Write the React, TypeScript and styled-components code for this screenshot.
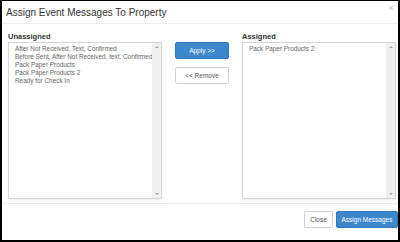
import React from 'react';
import styled, { createGlobalStyle } from 'styled-components';

const GlobalStyle = createGlobalStyle`
  html, body {
    margin: 0;
    padding: 0;
    background: #fff;
  }
  body {
    font-family: "Liberation Sans", Arial, sans-serif;
    color: #333;
  }
`;

const Frame = styled.div`
  width: 400px;
  height: 242px;
  box-sizing: border-box;
  border-style: solid;
  border-color: #000;
  border-width: 1px 2px 2px 2px;
  background: #fff;
  display: flex;
  flex-direction: column;
`;

const Header = styled.div`
  position: relative;
  height: 22px;
  padding: 0 4px;
  display: flex;
  align-items: center;
  border-bottom: 1px solid #ececec;
`;

const Title = styled.h4`
  margin: 0;
  font-size: 10px;
  font-weight: normal;
  color: #333;
`;

const CloseX = styled.span`
  position: absolute;
  right: 4px;
  top: 3px;
  font-size: 9px;
  color: #bbb;
  line-height: 9px;
`;

const Body = styled.div`
  flex: 1;
  padding: 8px 0 4px 6px;
  display: grid;
  grid-template-columns: 154px 54px 154px;
  column-gap: 13px;
`;

const Column = styled.div`
  display: flex;
  flex-direction: column;
`;

const Label = styled.div`
  font-size: 7.5px;
  font-weight: bold;
  color: #333;
  height: 9px;
  line-height: 9px;
  margin-bottom: 1px;
`;

const ListBox = styled.div`
  height: 157px;
  box-sizing: border-box;
  border: 1px solid #d6d6d6;
  box-shadow: 0 1px 2px rgba(0, 0, 0, 0.08);
  display: flex;
  background: #fff;
`;

const Items = styled.div`
  flex: 1;
  padding: 2px 0 0 6px;
  overflow: hidden;
`;

const Item = styled.div`
  font-size: 6.4px;
  line-height: 8px;
  color: #666;
  white-space: nowrap;
`;

const Track = styled.div`
  width: 9px;
  background: #f0f0f0;
  display: flex;
  flex-direction: column;
  justify-content: space-between;
  align-items: center;
  padding: 3px 0;
`;

const Arrow = styled.div<{ $down?: boolean }>`
  width: 0;
  height: 0;
  border-left: 2px solid transparent;
  border-right: 2px solid transparent;
  ${p => (p.$down ? 'border-top: 2px solid #a3a3a3;' : 'border-bottom: 2px solid #a3a3a3;')}
`;

const Actions = styled.div`
  padding-top: 10px;
  display: flex;
  flex-direction: column;
  gap: 8px;
`;

const Button = styled.button<{ $primary?: boolean; $w?: number }>`
  height: 17px;
  ${p => (p.$w ? `width: ${p.$w}px;` : '')}
  box-sizing: border-box;
  padding: 0 2px;
  border-radius: 2px;
  white-space: nowrap;
  font-family: "Liberation Sans", Arial, sans-serif;
  font-size: 6.5px;
  border: 1px solid ${p => (p.$primary ? '#2f78bd' : '#d3d3d3')};
  background: ${p => (p.$primary ? '#3d88cc' : '#fff')};
  color: ${p => (p.$primary ? '#fff' : '#555')};
`;

const Footer = styled.div`
  height: 37px;
  box-sizing: border-box;
  border-top: 1px solid #ececec;
  display: flex;
  justify-content: flex-end;
  align-items: flex-start;
  gap: 3px;
  padding-top: 7px;
`;

const unassigned = [
  'After Not Received, Text, Confirmed',
  'Before Sent, After Not Received, text, Confirmed',
  'Pack Paper Products',
  'Pack Paper Products 2',
  'Ready for Check In',
];

const assigned = ['Pack Paper Products 2'];

const List = ({ items }: { items: string[] }) => (
  <ListBox>
    <Items>
      {items.map((it, i) => (
        <Item key={i}>{it}</Item>
      ))}
    </Items>
    <Track>
      <Arrow />
      <Arrow $down />
    </Track>
  </ListBox>
);

const App = () => {
  return (
    <>
      <GlobalStyle />
      <Frame>
        <Header>
          <Title>Assign Event Messages To Property</Title>
          <CloseX>×</CloseX>
        </Header>
        <Body>
          <Column>
            <Label>Unassigned</Label>
            <List items={unassigned} />
          </Column>
          <Actions>
            <Button $primary>Apply &gt;&gt;</Button>
            <Button>&lt;&lt; Remove</Button>
          </Actions>
          <Column>
            <Label>Assigned</Label>
            <List items={assigned} />
          </Column>
        </Body>
        <Footer>
          <Button $w={29}>Close</Button>
          <Button $primary $w={62}>Assign Messages</Button>
        </Footer>
      </Frame>
    </>
  );
};

export default App;
